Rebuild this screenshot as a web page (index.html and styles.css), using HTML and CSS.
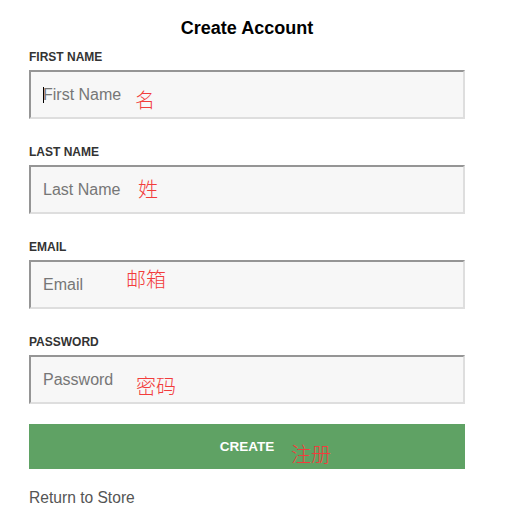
FILE: index.html
```html
<!DOCTYPE html>
<html lang="en">
<head>
<meta charset="utf-8">
<title>Create Account</title>
<link rel="stylesheet" href="styles.css">
</head>
<body>
<main class="page">
  <h1 class="title">Create Account</h1>
  <form class="form">
    <div class="field">
      <label class="label" for="first">First Name</label>
      <div class="box">
        <input class="input" id="first" type="text" placeholder="First Name">
        <span class="caret"></span>
        <span class="note note-first">名</span>
      </div>
    </div>
    <div class="field">
      <label class="label" for="last">Last Name</label>
      <div class="box">
        <input class="input" id="last" type="text" placeholder="Last Name">
        <span class="note note-last">姓</span>
      </div>
    </div>
    <div class="field">
      <label class="label" for="email">Email</label>
      <div class="box">
        <input class="input" id="email" type="email" placeholder="Email">
        <span class="note note-email">邮箱</span>
      </div>
    </div>
    <div class="field">
      <label class="label" for="pw">Password</label>
      <div class="box">
        <input class="input" id="pw" type="password" placeholder="Password">
        <span class="note note-pw">密码</span>
      </div>
    </div>
    <div class="box">
      <button class="button" type="button">Create</button>
      <span class="note note-create">注册</span>
    </div>
  </form>
  <a class="back" href="#">Return to Store</a>
</main>
</body>
</html>
```

FILE: styles.css
```css
* { box-sizing: border-box; }
html, body { margin: 0; padding: 0; background: #fff; }
body { font-family: "Liberation Sans", Arial, sans-serif; }

.page {
  width: 436px;
  margin-left: 29px;
  padding-top: 17px;
  display: flex;
  flex-direction: column;
}

.title {
  margin: 0 0 10px;
  font-size: 18px;
  line-height: 22px;
  font-weight: bold;
  text-align: center;
  color: #000;
}

.form {
  display: flex;
  flex-direction: column;
  margin: 0;
}

.field {
  display: flex;
  flex-direction: column;
  margin-bottom: 25px;
}

.label {
  display: block;
  padding-top: 1px;
  font-size: 12px;
  line-height: 15px;
  font-weight: bold;
  text-transform: uppercase;
  color: #333;
  margin-bottom: 5px;
}

.box { position: relative; }

.input {
  display: block;
  width: 100%;
  height: 49px;
  margin: 0;
  padding: 1px 12px 0;
  font-family: "Liberation Sans", Arial, sans-serif;
  font-size: 16px;
  color: #333;
  background: #f7f7f7;
  border-style: solid;
  border-width: 2px;
  border-color: #959595 #dedede #dedede #959595;
  border-radius: 0;
  outline: none;
}
.input::placeholder { color: #767676; opacity: 1; }

.caret {
  position: absolute;
  left: 14px;
  top: 17px;
  width: 1px;
  height: 16px;
  background: #000;
}

.note {
  position: absolute;
  font-family: "Noto Sans CJK SC", sans-serif;
  font-size: 20px;
  line-height: 20px;
  color: #f23c3c;
  font-weight: 300;
  white-space: nowrap;
  pointer-events: none;
}
.note-first { left: 106px; top: 20px; }
.note-last { left: 109px; top: 14px; }
.note-email { left: 97px; top: 9px; }
.note-pw { left: 107px; top: 21px; }
.note-create { left: 262px; top: 15px; }

.button {
  display: block;
  width: 100%;
  height: 45px;
  margin: -5px 0 0;
  padding: 0;
  border: 0;
  border-radius: 0;
  background: #5fa264;
  color: #fff;
  font-family: "Liberation Sans", Arial, sans-serif;
  font-size: 13.5px;
  font-weight: bold;
  text-transform: uppercase;
  cursor: pointer;
}

.back {
  margin-top: 19px;
  font-size: 15.6px;
  line-height: 20px;
  color: #555;
  text-decoration: none;
}
```
